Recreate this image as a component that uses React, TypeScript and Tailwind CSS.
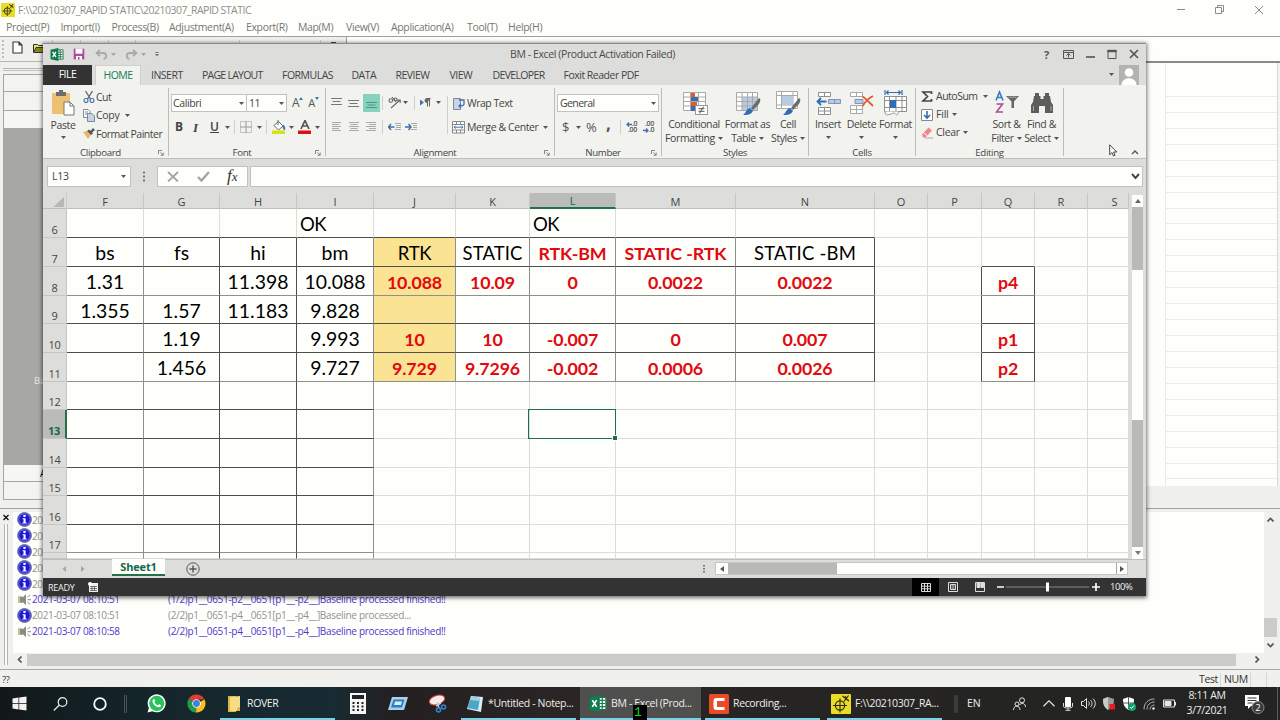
import React from "react";

const cx = (...parts: (string | false | undefined)[]) => parts.filter(Boolean).join(" ");

/* ---------- small shared glyphs ---------- */

function Caret({ className = "" }: { className?: string }) {
  return (
    <svg className={cx("h-[3px] w-[5px] shrink-0", className)} viewBox="0 0 5 3" fill="#555">
      <path d="M0 0h5L2.5 3z" />
    </svg>
  );
}

function Launcher() {
  return (
    <svg className="h-[6px] w-[6px]" viewBox="0 0 6 6" fill="none" stroke="#777" strokeWidth="0.9">
      <path d="M0.5 4V0.5H4M2.5 2.5L5 5M5.2 2.6V5.3H2.6" />
    </svg>
  );
}

function Sep({ className = "" }: { className?: string }) {
  return <div className={cx("w-px shrink-0 bg-[#cfd0cd]", className)} />;
}

function ExcelIcon({ className = "" }: { className?: string }) {
  return (
    <svg className={cx("shrink-0", className)} viewBox="0 0 14 14">
      <rect x="7" y="2" width="6.5" height="10" fill="#fff" stroke="#1f7a52" strokeWidth="1" />
      <path d="M8 4.5h5M8 7h5M8 9.5h5M10.5 2v10" stroke="#1f7a52" strokeWidth="1" />
      <path d="M0 1.8L8.5 0v14L0 12.2z" fill="#107c4c" />
      <path d="M2.3 4.2l3.6 5.6M5.9 4.2L2.3 9.8" stroke="#fff" strokeWidth="1.4" />
    </svg>
  );
}

function SurveyIcon({ className = "" }: { className?: string }) {
  return (
    <svg className={cx("shrink-0", className)} viewBox="0 0 20 20">
      <rect width="20" height="20" rx="1" fill="#e8dc27" />
      <circle cx="9" cy="11.5" r="4.6" fill="none" stroke="#2c2a08" strokeWidth="1.2" />
      <path d="M9 4.5v14M2 11.5h14" stroke="#2c2a08" strokeWidth="1.1" />
      <path d="M11.500 2l6.500 5M17.500 1.500L13 7.500M14 2.500l3 3.500" stroke="#2c2a08" strokeWidth="1.200" />
    </svg>
  );
}

/* ---------- background application ---------- */

const menus: [string, string][] = [
  ["Project(P)", "w-[54.500px]"],
  ["Import(I)", "w-[51px]"],
  ["Process(B)", "w-[57.500px]"],
  ["Adjustment(A)", "w-[77px]"],
  ["Export(R)", "w-[52px]"],
  ["Map(M)", "w-[48px]"],
  ["View(V)", "w-[45px]"],
  ["Application(A)", "w-[76px]"],
  ["Tool(T)", "w-[41px]"],
  ["Help(H)", "w-[40px]"],
];

const log: { kind: "info" | "sound"; time: string; text: string }[] = [
  { kind: "info", time: "20", text: "" },
  { kind: "info", time: "20", text: "" },
  { kind: "info", time: "20", text: "" },
  { kind: "info", time: "20", text: "" },
  { kind: "info", time: "20", text: "" },
  { kind: "sound", time: "2021-03-07 08:10:51", text: "(1/2)p1__0651-p2__0651[p1__-p2__]Baseline processed finished!!" },
  { kind: "info", time: "2021-03-07 08:10:51", text: "(2/2)p1__0651-p4__0651[p1__-p4__]Baseline processed..." },
  { kind: "sound", time: "2021-03-07 08:10:58", text: "(2/2)p1__0651-p4__0651[p1__-p4__]Baseline processed finished!!" },
];

function InfoIcon() {
  return (
    <svg className="h-[15px] w-[15px] shrink-0" viewBox="0 0 15 15">
      <circle cx="7.5" cy="7.5" r="6.9" fill="#1c17d6" stroke="#77788c" strokeWidth="1" />
      <circle cx="7.5" cy="7.5" r="5.7" fill="none" stroke="#c9c9f5" strokeWidth="0.5" />
      <rect x="6.4" y="3" width="2.2" height="2" fill="#fff" />
      <path d="M5.6 6.2h3v4.2h1v1.1H5.5v-1.1h1V7.3h-.9z" fill="#fff" />
    </svg>
  );
}

function SoundIcon() {
  return (
    <svg className="h-[13px] w-[15px] shrink-0" viewBox="0 0 15 13">
      <rect x="1" y="3" width="4" height="7" fill="#c4c99b" />
      <path d="M3 4h3l3-3v11L6 9.5H3z" fill="#8b8c88" />
      <path d="M10.5 4L13 2M10.5 6.7H14M10.5 9l2.5 2.4" stroke="#8b8c88" strokeWidth="1" />
    </svg>
  );
}

function LeftPane() {
  return (
    <div className="flex w-[43px] flex-col overflow-hidden border-t border-[#b4b5b1] bg-[#f0f0ed] pl-[3px]">
      <div className="mt-[6px] h-px bg-[#b4b5b1]" />
      <div className="mt-[1px] h-px bg-[#c4c5c1]" />
      <div className="mt-[3px] h-[18px] shrink-0 border border-r-0 border-[#a5a6a2] bg-[#f3f3f1]" />
      <div className="h-[19px] shrink-0 border border-t-0 border-r-0 border-[#a5a6a2] bg-[#f3f3f1]" />
      <div className="h-[17px] shrink-0 border-l border-[#a5a6a2] bg-[#f6f6f4]" />
      <div className="flex h-[337px] shrink-0 bg-[#a7a8a4] pt-[245px] pl-[31px] text-[9.5px] leading-[16px] text-[#e9e9e7]">Ba</div>
      <div className="h-[17px] shrink-0 border-b border-l border-[#a5a6a2] bg-[#f6f6f4] pl-[36px] text-[10px] leading-[17px] text-black">A</div>
      <div className="h-[18px] shrink-0 border border-t-0 border-r-0 border-[#a5a6a2] bg-[#f3f3f1]" />
    </div>
  );
}

function RightPane() {
  return (
    <div className="flex flex-1 flex-col border-t-2 border-[#8a8b89] bg-[#fefffb]">
      <div className="flex h-[423px]">
        <div className="w-[1123px] border-r border-[#ebece8]" />
        <div className="flex flex-1 flex-col overflow-hidden pt-[18px]">
          {Array.from({ length: 25 }, (_, i) => (
            <div key={i} className="h-[15.95px] shrink-0 border-b border-[#ebece8]" />
          ))}
        </div>
        <div className="w-[3px] border-l border-[#d8d9d5] bg-[#f4f4f2]" />
      </div>
      <div className="h-[19px] bg-[#efefed]" />
    </div>
  );
}

function BackgroundApp() {
  return (
    <div className="flex h-[687px] w-[1280px] flex-col bg-[#fefffb]">
      <div className="flex h-[20px] items-center pl-[1px]">
        <SurveyIcon className="h-[14px] w-[14px]" />
        <span className="ml-[3px] w-[1157px] text-[10.5px] tracking-[-0.52px] text-[#8e8e8b]">{"F:\\\\20210307_RAPID STATIC\\20210307_RAPID STATIC"}</span>
        <svg className="h-[12px] w-[92px] shrink-0" viewBox="0 0 92 12" fill="none" stroke="#8b8b89" strokeWidth="1">
          <path d="M2 5.5h8M40.5 3.5h6v6h-6zM42.5 3V1.500h6v6H47M80 2l8 8M88 2l-8 8" />
        </svg>
      </div>
      <div className="flex h-[16px] items-center pb-[2px] pl-[6px] text-[10.5px] tracking-[-0.36px] text-[#777774]">
        {menus.map(([name, width]) => (
          <span key={name} className={width}>{name}</span>
        ))}
      </div>
      <div className="flex h-[25px] items-start border-t border-[#a0a19e]">
        <div className="flex h-[24px] w-[347px] items-start border-r border-[#999] bg-[#f0f0ed]">
          <div className="mt-[3px] ml-[2px] h-[18px] w-0 border-l-2 border-dotted border-[#c0c1bd]" />
          <svg className="mt-[4px] ml-[8px] h-[13px] w-[11px] shrink-0" viewBox="0 0 11 13" fill="#fff" stroke="#333" strokeWidth="1.1">
            <path d="M1 1h6l3 3v8H1zM7 1v3h3" />
          </svg>
          <svg className="mt-[5px] ml-[10px] h-[11px] w-[14px] shrink-0" viewBox="0 0 14 11">
            <path d="M0.500 10V2.500h4l1 1h5v2" fill="#e8e46a" stroke="#333" />
            <path d="M0.500 10.500L3 5.500h10.500l-3 5z" fill="#8b8b1d" stroke="#333" />
          </svg>
          <div className="mt-[3px] ml-[5px] flex">
            <Sep className="h-[4px] bg-[#888]" />
            <Sep className="ml-[27px] h-[4px] bg-[#888]" />
            <Sep className="ml-[27px] h-[4px] bg-[#888]" />
            <Sep className="ml-[26px] h-[4px] bg-[#888]" />
            <Sep className="ml-[103px] h-[4px] bg-[#888]" />
            <Sep className="ml-[80px] h-[4px] bg-[#888]" />
            <div className="mt-[2px] ml-[10px] h-[2px] w-[5px] bg-[#444]" />
          </div>
        </div>
        <div className="h-[24px] flex-1 bg-[#fefffb]" />
      </div>
      <div className="flex h-[444px]">
        <LeftPane />
        <RightPane />
      </div>
      <div className="h-[4px] border-b border-[#a0a19e] bg-[#f0f0ed]" />
      <div className="flex h-[160px] bg-[#f0f0ed] pt-[3px]">
        <div className="flex w-[13px] flex-col items-center">
          <svg className="mt-[2px] mr-[2px] h-[7px] w-[6px]" viewBox="0 0 6 7" stroke="#111" strokeWidth="1.4">
            <path d="M0.500 1l5 5M5.500 1l-5 5" />
          </svg>
          <div className="mt-[3px] mr-[1px] h-[141px] w-[4px] border-x border-[#b4b5b1] bg-[#fafaf8]" />
        </div>
        <div className="flex flex-1 flex-col">
          <div className="flex h-[141px]">
            <div className="w-[1251px] bg-[#fefffb] pl-[4px]">
              {log.map((l, i) => (
                <div
                  key={i}
                  className={cx(
                    "flex h-[15.9px] items-center text-[10px] tracking-[-0.35px]",
                    l.kind === "info" ? "text-[#92928f]" : "text-[#5534d0]",
                  )}
                >
                  {l.kind === "info" ? <InfoIcon /> : <SoundIcon />}
                  <span className="w-[136px]">{l.time}</span>
                  <span className="tracking-[-0.310px]">{l.text}</span>
                </div>
              ))}
            </div>
            <div className="flex w-[13px] flex-col items-center bg-[#f0f0ed]">
              <svg className="mt-[5px] h-[5px] w-[7px]" viewBox="0 0 7 5" fill="none" stroke="#555" strokeWidth="1.6">
                <path d="M0.500 4.500l3-3 3 3" />
              </svg>
              <div className="mt-[96px] h-[19px] w-[13px] bg-[#cbccc8]" />
              <svg className="mt-[6px] h-[5px] w-[7px]" viewBox="0 0 7 5" fill="none" stroke="#555" strokeWidth="1.6">
                <path d="M0.500 0.500l3 3 3-3" />
              </svg>
            </div>
          </div>
          <div className="flex h-[13px] items-center">
            <svg className="ml-[4px] h-[7px] w-[5px]" viewBox="0 0 5 7" fill="none" stroke="#555" strokeWidth="1.6">
              <path d="M4.500 0.500l-3 3 3 3" />
            </svg>
            <div className="ml-[5px] h-[12px] w-[1209px] bg-[#cbccc8]" />
            <svg className="ml-[19px] h-[7px] w-[5px]" viewBox="0 0 5 7" fill="none" stroke="#555" strokeWidth="1.6">
              <path d="M0.500 0.500l3 3-3 3" />
            </svg>
          </div>
        </div>
      </div>
      <div className="flex flex-1 items-center border-t border-[#a9aaa6] bg-[#f0f0ed] pt-[2px] pl-[2px] text-[10.5px] tracking-[-0.400px] text-[#333]">
        <span className="w-[1197px] text-[9.500px]">??</span>
        <span className="w-[21px]">Test</span>
        <div className="flex h-[14px] w-[31px] items-center border-x border-[#d6d7d3] pl-[3px]">NUM</div>
        <div className="h-[14px] w-[16px] border-r border-[#d6d7d3]" />
      </div>
    </div>
  );
}

/* ---------- Excel window ---------- */

function TitleBar() {
  return (
    <div className="flex h-[21px] items-center">
      <ExcelIcon className="ml-[7px] h-[13px] w-[14px]" />
      <svg className="ml-[9px] h-[12px] w-[12px]" viewBox="0 0 12 12">
        <path d="M0.700 0.700h10.600v10.600H0.700z" fill="#b04a9e" />
        <path d="M2.500 0.700h7v5h-7z" fill="#fff" />
        <path d="M3 8h6v3.500H3z" fill="#fff" />
        <path d="M5 9h1.500v2.500H5z" fill="#b04a9e" />
      </svg>
      <svg className="ml-[10px] h-[11px] w-[13px]" viewBox="0 0 13 11" fill="none" stroke="#a9aaa7" strokeWidth="1.8">
        <path d="M5 0.800L1.500 4 5 7.200M1.500 4H8c4 0 4.500 5 0.500 6" />
      </svg>
      <Caret className="ml-[3px] opacity-40" />
      <svg className="ml-[9px] h-[11px] w-[13px]" viewBox="0 0 13 11" fill="none" stroke="#a9aaa7" strokeWidth="1.8">
        <path d="M8 0.800L11.500 4 8 7.200M11.500 4H5C1 4 0.500 9 4.500 10" />
      </svg>
      <Caret className="ml-[3px] opacity-40" />
      <svg className="ml-[9px] h-[5px] w-[4px]" viewBox="0 0 5 6" fill="#777">
        <path d="M0.500 0h4v1h-4zM0 2.500h5L2.500 5.500z" />
      </svg>
      <div className="ml-[351px] w-[170px] text-[10.5px] tracking-[-0.400px] text-[#4a4a48]">BM - Excel (Product Activation Failed)</div>
      <span className="ml-[364px] w-[19px] text-[11px] font-bold text-[#555]">?</span>
      <svg className="h-[10px] w-[78px]" viewBox="0 0 78 10" fill="none" stroke="#555" strokeWidth="1">
        <path d="M0.500 1.500h10v8h-10zM0.500 3.500h10M5.500 8.500V5M3.500 6.500l2-2 2 2" />
        <path d="M23 8h9" strokeWidth="1.6" />
        <path d="M45 1v8.500h8V1" />
        <path d="M44.500 2h9" strokeWidth="2.4" />
        <path d="M67 1l8 8M75 1l-8 8" strokeWidth="1.7" />
      </svg>
    </div>
  );
}

const tabs: [string, string][] = [
  ["INSERT", "w-[51px]"],
  ["PAGE LAYOUT", "w-[80px] tracking-[-0.750px]"],
  ["FORMULAS", "w-[69.500px]"],
  ["DATA", "w-[44px]"],
  ["REVIEW", "w-[54px]"],
  ["VIEW", "w-[43px]"],
  ["DEVELOPER", "w-[71px] tracking-[-0.650px]"],
  ["Foxit Reader PDF", "w-[90px]"],
];

function TabRow() {
  return (
    <div className="flex h-[20px] text-[10.500px] tracking-[-0.500px] text-[#444]">
      <div className="flex h-full w-[49px] items-center justify-center bg-[#333] text-white">FILE</div>
      <div className="ml-[3px] flex h-[21px] w-[46px] items-center justify-center border border-b-0 border-[#cfd0cd] bg-[#f2f3ef] text-[#0f7f57]">HOME</div>
      <div className="flex w-[968px] items-center pt-[1px] pl-[10px]">
        {tabs.map(([name, width]) => (
          <span key={name} className={width}>{name}</span>
        ))}
      </div>
      <Caret className="mt-[8px]" />
      <svg className="ml-[5px] h-[20px] w-[20px]" viewBox="0 0 20 20">
        <rect width="20" height="20" fill="#b3b4b1" />
        <circle cx="10" cy="7.500" r="4.300" fill="#fff" />
        <path d="M2.500 20c0-9 15-9 15 0z" fill="#fff" />
      </svg>
    </div>
  );
}

function Group({ label, width, children, launcher }: { label: string; width: string; children: React.ReactNode; launcher?: boolean }) {
  return (
    <div className={cx("flex h-[73px] shrink-0 flex-col", width)}>
      <div className="flex h-[61px]">{children}</div>
      <div
        className={cx(
          "grid h-[12px] items-center pt-[2px] text-center text-[9.700px] tracking-[-0.350px] text-[#444]",
          launcher ? "grid-cols-[1fr_10px]" : "grid-cols-1",
        )}
      >
        <span>{label}</span>
        {launcher && <Launcher />}
      </div>
    </div>
  );
}

function GroupLine() {
  return <div className="mt-[3px] h-[68px] w-px shrink-0 bg-[#bdbebb]" />;
}

function Clipboard() {
  return (
    <Group label="Clipboard" width="w-[125px]" launcher>
      <div className="flex w-[40px] flex-col items-center">
        <svg className="mt-[5px] h-[26px] w-[24px]" viewBox="0 0 24 26">
          <rect x="1" y="3" width="18" height="21" fill="#ecc172" />
          <path d="M5 2h3V0h4v2h3v4H5z" fill="#6d6e6c" />
          <path d="M13 12h6l4 4v9H13z" fill="#fff" stroke="#777" />
          <path d="M19 12v4h4" fill="none" stroke="#777" />
        </svg>
        <span className="mt-[3px] text-[10.500px] leading-[13px] tracking-[-0.400px]">Paste</span>
        <Caret className="mt-[4px]" />
      </div>
      <div className="flex flex-col pt-[3px] text-[10.500px] tracking-[-0.500px]">
        <div className="flex h-[18.500px] items-center">
          <svg className="h-[12px] w-[13px]" viewBox="0 0 13 12" fill="none">
            <path d="M2.500 0l5 8M9.500 0l-5 8" stroke="#666" strokeWidth="1.300" />
            <circle cx="3" cy="9.500" r="2" stroke="#3d70b5" strokeWidth="1.100" />
            <circle cx="9" cy="9.500" r="2" stroke="#3d70b5" strokeWidth="1.100" />
          </svg>
          <span>Cut</span>
        </div>
        <div className="flex h-[18.500px] items-center">
          <svg className="h-[13px] w-[13px]" viewBox="0 0 13 13" fill="#fff" stroke="#7f8896" strokeWidth="1">
            <path d="M0.500 0.500H5l2 2v6H0.500zM2 3h3M2 5h3" />
            <path d="M4.500 4.500H9l2.500 2.500v5.500h-7z" fill="#c5d3e6" />
          </svg>
          <span className="tracking-[-0.300px]">Copy</span>
          <Caret className="ml-[6px]" />
        </div>
        <div className="flex h-[18.500px] items-center">
          <svg className="h-[11px] w-[13px]" viewBox="0 0 13 11">
            <path d="M0 4l4-1 4 4-3 4z" fill="#e6b866" />
            <path d="M4 3l2-1.500 4 4L8 7zM7.500 3L10 0l2 2-3 2.500z" fill="#555" />
          </svg>
          <span>Format Painter</span>
        </div>
      </div>
    </Group>
  );
}

function FontGroup() {
  return (
    <Group label="Font" width="w-[156px]" launcher>
      <div className="flex flex-col pt-[9px] pl-[2px]">
        <div className="flex h-[18px] items-center text-[10.500px] tracking-[-0.400px]">
          <div className="flex h-[18px] w-[76px] items-center justify-between border border-[#c2c3c0] bg-[#fefffb] pt-[1px] pr-[2px] pl-px">
            Calibri
            <Caret />
          </div>
          <div className="flex h-[18px] w-[40px] items-center justify-between border border-l-0 border-[#c2c3c0] bg-[#fefffb] pt-[1px] pr-[2px] pl-[2px]">
            11
            <Caret />
          </div>
          <span className="ml-[5px] text-[12px] text-[#555]">A</span>
          <svg className="mt-[-8px] h-[3px] w-[4px]" viewBox="0 0 4 3" fill="#3d70b5"><path d="M2 0l2 3H0z" /></svg>
          <span className="ml-[5px] text-[11px] text-[#555]">A</span>
          <svg className="mt-[-8px] h-[3px] w-[4px]" viewBox="0 0 4 3" fill="#3d70b5"><path d="M2 3L0 0h4z" /></svg>
        </div>
        <div className="mt-[7px] flex h-[17px] items-center text-[12px] text-[#444]">
          <b className="ml-[4px] w-[18px]">B</b>
          <i className="w-[17px] font-['Liberation_Serif',serif] text-[13px] font-bold">I</i>
          <span className="w-[15px] font-semibold underline">U</span>
          <Caret />
          <Sep className="ml-[4px] h-[14px]" />
          <svg className="ml-[5px] h-[12px] w-[12px]" viewBox="0 0 12 12" fill="none" stroke="#999" strokeWidth="1">
            <path d="M0.500 0.500h11v11H0.500z" strokeDasharray="1 1" />
            <path d="M6 0v12M0 6h12" />
          </svg>
          <Caret className="ml-[5px]" />
          <Sep className="ml-[4px] h-[14px]" />
          <svg className="ml-[5px] h-[14px] w-[14px]" viewBox="0 0 14 14" fill="none">
            <path d="M2 5.500l4.500-4 4.500 4.500-4.500 4z" fill="#fff" stroke="#666" />
            <path d="M6 0v5" stroke="#666" />
            <path d="M11 5c2 1 2 3 1.500 5-1-1-1.500-3-1.500-5z" fill="#3d70b5" stroke="#3d70b5" />
            <rect y="10.500" width="13" height="3.500" fill="#d3e50f" />
          </svg>
          <Caret className="ml-[3px]" />
          <svg className="ml-[4px] h-[14px] w-[14px]" viewBox="0 0 14 14" fill="none">
            <path d="M3 9L7 0.500 11 9M4.500 6h5" stroke="#555" strokeWidth="1.700" />
            <rect y="10.500" width="13" height="3.500" fill="#e00f17" />
          </svg>
          <Caret className="ml-[3px]" />
        </div>
      </div>
    </Group>
  );
}

function Lines({ d, color = "#777" }: { d: string; color?: string }) {
  return (
    <svg className="h-[12px] w-[13px] shrink-0" viewBox="0 0 13 12" fill="none" stroke={color} strokeWidth="1">
      <path d={d} />
    </svg>
  );
}

function Alignment() {
  return (
    <Group label="Alignment" width="w-[228px]" launcher>
      <div className="flex w-[121px] flex-col pt-[9px] pl-[4px]">
        <div className="flex h-[18px] items-center">
          <Lines d="M1 1.500h11M2.500 4.500h8M1 7.500h11" />
          <div className="w-[4px]" />
          <Lines d="M1 3.500h11M2.500 6.500h8M1 9.500h11" />
          <div className="ml-[3px] flex h-[18px] w-[17px] items-center justify-center bg-[#85d3bd]">
            <Lines d="M1 5.500h11M2.500 8h8M1 10.500h11" color="#55927f" />
          </div>
          <Sep className="ml-[2px] h-[14px]" />
          <svg className="ml-[5px] h-[13px] w-[13px]" viewBox="0 0 13 13" fill="none" stroke="#666" strokeWidth="1.100">
            <circle cx="2.800" cy="4.500" r="1.800" />
            <path d="M4 1l4 5" />
            <circle cx="7.500" cy="3.500" r="1.500" />
            <path d="M3 12l9-8M9 4h3.200v3" />
          </svg>
          <Caret className="ml-[2px]" />
          <Sep className="ml-[6px] h-[14px]" />
          <svg className="ml-[5px] h-[9px] w-[11px]" viewBox="0 0 11 9">
            <path d="M0 1.500l4 3-4 3z" fill="#3d70b5" />
            <path d="M7.500 0.500v8M9.500 0.500v8M10.500 0.500H7a2 2 0 000 4" fill="#666" stroke="#666" />
          </svg>
          <Caret className="ml-[5px]" />
        </div>
        <div className="mt-[7px] flex h-[17px] items-center">
          <div className="w-px" />
          <Lines d="M1 1.500h9M1 3.500h7M1 5.500h9M1 7.500h7M1 9.500h9" color="#aaa" />
          <div className="w-[4px]" />
          <Lines d="M1 1.500h10M2.500 3.500h7M1 5.500h10M2.500 7.500h7M1 9.500h10" color="#aaa" />
          <div className="w-[4px]" />
          <Lines d="M1 1.500h10M4 3.500h7M1 5.500h10M4 7.500h7M1 9.500h10" color="#aaa" />
          <Sep className="ml-[4px] h-[14px]" />
          <svg className="ml-[5px] h-[10px] w-[30px]" viewBox="0 0 30 10" fill="none">
            <path d="M7 1.500h6M8 3.500h5M8 5.500h5M7 7.500h6M23 1.500h6M25 3.500h4M25 5.500h4M23 7.500h6" stroke="#aaa" />
            <path d="M0.500 5h6M3 2L0.500 5 3 8M17 5h6M20.500 2L23 5l-2.500 3" stroke="#3d70b5" strokeWidth="1.500" />
          </svg>
        </div>
      </div>
      <Sep className="mt-[11px] h-[38px]" />
      <div className="flex flex-col pt-[9px] pl-[4px] text-[10.500px] tracking-[-0.500px]">
        <div className="flex h-[18px] items-center pt-[2px]">
          <svg className="h-[14px] w-[14px]" viewBox="0 0 14 14" fill="none">
            <path d="M1.500 1.500h7v11h-7z" fill="#c5d6ea" stroke="#888" />
            <path d="M7 3h5v4c0 2-3 2-5 2M9 7L7 9l2 2" stroke="#3d70b5" strokeWidth="1.300" />
          </svg>
          <span className="ml-px">Wrap Text</span>
        </div>
        <div className="mt-[7px] flex h-[17px] items-center pt-[1px]">
          <svg className="h-[13px] w-[14px] shrink-0" viewBox="0 0 14 13" fill="#fff" stroke="#888">
            <path d="M0.500 0.500h12v11.500h-12zM0.500 3.500h12M0.500 9h12M4.500 0.500v3M8.500 0.500v3M4.500 9v3M8.500 9v3" />
            <path d="M2 6.200h9M3.500 4.800L2 6.200l1.500 1.500M9.500 4.800L11 6.200 9.500 7.700" fill="none" stroke="#3d70b5" />
          </svg>
          <span className="ml-px w-[76px] tracking-[-0.420px]">Merge &amp; Center</span>
          <Caret />
        </div>
      </div>
    </Group>
  );
}

function NumberGroup() {
  return (
    <Group label="Number" width="w-[106px]" launcher>
      <div className="flex flex-col pt-[9px] pl-[2px]">
        <div className="flex h-[18px] w-[102px] items-center justify-between border border-[#c2c3c0] bg-[#fefffb] px-[2px] pt-[1px] text-[10.500px] tracking-[-0.600px]">
          General
          <Caret />
        </div>
        <div className="mt-[7px] flex h-[17px] items-center text-[13px] text-[#555]">
          <span className="ml-[5px] w-[14px]">$</span>
          <Caret />
          <span className="ml-[5px] w-[20px]">%</span>
          <span className="w-[14px] pb-[6px] text-[17px] leading-[8px] font-bold">,</span>
          <Sep className="h-[14px]" />
          <div className="ml-[5px] flex w-[17px] flex-col text-[7px] leading-[6px] font-semibold tracking-[-0.300px]">
            <span className="flex items-center">
              <svg className="h-[5px] w-[6px]" viewBox="0 0 6 5" fill="none" stroke="#3d70b5" strokeWidth="1.300"><path d="M6 2.500H1M3 0.500l-2 2 2 2" /></svg>.0
            </span>
            <span className="pl-[2px]">.00</span>
          </div>
          <div className="flex flex-col text-[7px] leading-[6px] font-semibold tracking-[-0.300px]">
            <span className="pl-[2px]">.00</span>
            <span className="flex items-center">
              <svg className="h-[5px] w-[6px]" viewBox="0 0 6 5" fill="none" stroke="#3d70b5" strokeWidth="1.300"><path d="M0 2.500h5M3 0.500l2 2-2 2" /></svg>.0
            </span>
          </div>
        </div>
      </div>
    </Group>
  );
}

function BigButton({ icon, lines, width, caretBelow }: { icon: React.ReactNode; lines: string[]; width: string; caretBelow?: boolean }) {
  return (
    <div className={cx("flex shrink-0 flex-col items-center pt-[5px] text-[10.500px] leading-[13.500px] tracking-[-0.400px]", width)}>
      <div className="flex h-[28.500px] items-start">{icon}</div>
      <span>{lines[0]}</span>
      {caretBelow ? (
        <Caret className="mt-[4px]" />
      ) : (
        <span className="flex items-center gap-[3px]">
          {lines[1]}
          <Caret />
        </span>
      )}
    </div>
  );
}

function Brush() {
  return (
    <>
      <path d="M24 8c2 1 1.500 4-0.500 6.500L18 20l-2-2z" fill="#6b6c6a" />
      <path d="M15 18l3 3c-2 4-6 4-10 4 3-2 3-6 7-7z" fill="#2f6eb5" />
    </>
  );
}

function StylesGroup() {
  return (
    <Group label="Styles" width="w-[146px]">
      <BigButton
        width="w-[64px]"
        lines={["Conditional", "Formatting"]}
        icon={
          <svg className="ml-[2px] h-[26px] w-[26px]" viewBox="0 0 26 26">
            <path d="M1.500 2.500h22v18h-22zM1.500 7h22M1.500 11.500h22M1.500 16h22M8.500 2.500v18M16.500 2.500v18" fill="#fff" stroke="#a9aaa7" />
            <path d="M9 3h4v4H9zM9 12h6v4H9z" fill="#e2592f" />
            <path d="M9 7h7v4H9zM9 16h4v5H9z" fill="#3a6fae" />
            <rect x="13.500" y="15.500" width="12" height="9" fill="#fff" stroke="#999" />
            <path d="M16.500 18.700h6M16.500 21.300h6M21.500 16.500l-4 7" stroke="#555" />
          </svg>
        }
      />
      <BigButton
        width="w-[43px]"
        lines={["Format as", "Table"]}
        icon={
          <svg className="h-[26px] w-[26px]" viewBox="0 0 26 26">
            <path d="M1.500 2.500h21v18h-21z" fill="#fff" />
            <path d="M7 7h15.500v13.500H7z" fill="#b8cbe6" />
            <path d="M1.500 2.500h21v18h-21zM1.500 7h21M1.500 11.500h21M1.500 16h21M7 2.500v18M12.500 2.500v18M17.500 2.500v18" fill="none" stroke="#a9aaa7" />
            <Brush />
          </svg>
        }
      />
      <BigButton
        width="w-[38px]"
        lines={["Cell", "Styles"]}
        icon={
          <svg className="h-[26px] w-[26px]" viewBox="0 0 26 26">
            <path d="M1.500 1.500h21v17h-21zM1.500 5.500h21M1.500 15h21M6.500 1.500v17M18 1.500v17" fill="#fff" stroke="#a9aaa7" />
            <path d="M7 6h11v9H7z" fill="#b8cbe6" />
            <Brush />
          </svg>
        }
      />
    </Group>
  );
}

function CellsGroup() {
  return (
    <Group label="Cells" width="w-[106px]">
      <BigButton
        width="w-[38px]"
        lines={["Insert"]}
        caretBelow
        icon={
          <svg className="h-[26px] w-[25px]" viewBox="0 0 25 26">
            <path d="M2.500 2.500h12v4h-12zM8.500 2.500v4M2.500 17.500h12v7h-12zM8.500 17.500v7M2.500 21h12" fill="#fff" stroke="#8f908d" />
            <path d="M12.500 9.500h12v4h-12zM18.500 9.500v4" fill="#b8cbe6" stroke="#7f95b3" />
            <path d="M1.500 11.500h9M5 8l-3.500 3.500L5 15" fill="none" stroke="#2f6eb5" strokeWidth="1.800" />
          </svg>
        }
      />
      <BigButton
        width="w-[29px]"
        lines={["Delete"]}
        caretBelow
        icon={
          <svg className="h-[26px] w-[25px]" viewBox="0 0 25 26">
            <path d="M1.500 2.500h12v4h-12zM7.500 2.500v4M1.500 15.500h12v8h-12zM7.500 15.500v8M1.500 19.500h12" fill="#fff" stroke="#a9aaa7" />
            <path d="M6 9.500h8v4H6z" fill="#b8cbe6" stroke="#7f95b3" />
            <path d="M13.500 6.500c3 2 7 6 10.500 9.500M24 6c-4 2-8 6-10.500 10" fill="none" stroke="#e2592f" strokeWidth="1.800" />
          </svg>
        }
      />
      <BigButton
        width="w-[39px]"
        lines={["Format"]}
        caretBelow
        icon={
          <svg className="h-[27px] w-[25px]" viewBox="0 0 25 27">
            <path d="M2 0v5M19 0v5M3 2.500h15M5.500 0.500l-2 2 2 2M15.500 0.500l2 2-2 2" fill="none" stroke="#2f6eb5" strokeWidth="1.200" />
            <path d="M1.500 6.500h22v15h-22zM1.500 10.500h22M1.500 17.500h22M6.500 6.500v15M13 6.500v15M19 6.500v15" fill="#fff" stroke="#8f908d" />
            <path d="M7 10h6v8H7z" fill="#2f6eb5" />
            <path d="M2 21.500c0 5 4 3 6 2.500s3-2 4.500 0 3 0 3-2.500" fill="#fff" stroke="#8f908d" />
          </svg>
        }
      />
    </Group>
  );
}

function EditingGroup() {
  return (
    <Group label="Editing" width="w-[147px]">
      <div className="flex w-[73px] flex-col pt-[3px] pl-[5px] text-[10.500px] tracking-[-0.500px]">
        <div className="flex h-[18px] items-center">
          <svg className="h-[11px] w-[12px] shrink-0" viewBox="0 0 12 11" fill="none" stroke="#444" strokeWidth="1.700">
            <path d="M10.500 3V1H2l4.500 4.500L2 10h8.500V8" />
          </svg>
          <span className="ml-[3px] w-[47px]">AutoSum</span>
          <Caret />
        </div>
        <div className="flex h-[18px] items-center">
          <svg className="h-[12px] w-[12px]" viewBox="0 0 12 12" fill="#fff" stroke="#888">
            <path d="M0.500 0.500h11v11h-11z" />
            <path d="M6 2v7M3 6l3 3 3-3" fill="none" stroke="#2f6eb5" strokeWidth="1.600" />
          </svg>
          <span className="ml-[3px] tracking-[-0.200px]">Fill</span>
          <Caret className="ml-[3px]" />
        </div>
        <div className="flex h-[18px] items-center">
          <svg className="h-[12px] w-[12px]" viewBox="0 0 12 12">
            <path d="M1 7.500L7.500 0.500l3.500 3-6.500 7H2z" fill="#f0868c" />
            <path d="M2.500 5.500l4 3.500" stroke="#fff" />
            <path d="M4 11h8" stroke="#aaa" />
          </svg>
          <span className="ml-[3px] tracking-[-0.300px]">Clear</span>
          <Caret className="ml-[3px]" />
        </div>
      </div>
      <BigButton
        width="w-[35px]"
        lines={["Sort &", "Filter"]}
        icon={
          <svg className="h-[26px] w-[24px]" viewBox="0 0 24 26" fill="none">
            <path d="M1 10.500L4.500 2 8 10.500M2.300 7.500h4.500" stroke="#3a78c2" strokeWidth="1.600" />
            <path d="M1.500 14h6l-6 8h6.500" stroke="#b04a9e" strokeWidth="1.600" />
            <path d="M11 6h13l-5 5.500V18h-2.500v-6.500z" fill="#666765" />
            <path d="M13.500 7.200h8" stroke="#aaa" />
          </svg>
        }
      />
      <BigButton
        width="w-[35px]"
        lines={["Find &", "Select"]}
        icon={
          <svg className="h-[24px] w-[24px]" viewBox="0 0 24 24" fill="#5d5e5c">
            <path d="M5 3h4v3h1.500v3h3V6H15V3h4v3h1l1 6 2 3v8h-8v-7H9v7H1v-8l2-3 1-6h1z" />
            <path d="M3.500 16v5M21 16v5" stroke="#aaa" />
          </svg>
        }
      />
    </Group>
  );
}

function Ribbon() {
  return (
    <div className="flex h-[74px] border-b border-[#bfc0bd] bg-[#f2f3ef] text-[#444]">
      <Clipboard />
      <GroupLine />
      <FontGroup />
      <GroupLine />
      <Alignment />
      <GroupLine />
      <NumberGroup />
      <GroupLine />
      <StylesGroup />
      <GroupLine />
      <CellsGroup />
      <GroupLine />
      <EditingGroup />
      <GroupLine />
      <svg className="mt-[64px] ml-[67px] h-[6px] w-[8px]" viewBox="0 0 8 6" fill="none" stroke="#555" strokeWidth="1.400">
        <path d="M1 5l3-3 3 3" />
      </svg>
    </div>
  );
}

function FormulaBar() {
  return (
    <div className="flex h-[35px] items-start pt-[7px]">
      <div className="ml-[4px] flex h-[21px] w-[84px] items-center justify-between border border-[#c2c3c0] bg-[#fefffb] pt-[1px] pr-[4px] pl-[4px] text-[10.500px] tracking-[-0.300px] text-[#444]">
        L13
        <Caret />
      </div>
      <svg className="mt-[5px] ml-[12px] h-[11px] w-[2px]" viewBox="0 0 2 11" fill="#777">
        <path d="M0 0.500h2v2H0zM0 4.500h2v2H0zM0 8.500h2v2H0z" />
      </svg>
      <div className="ml-[12px] flex h-[21px] w-[91px] items-center border border-[#c2c3c0] bg-[#fefffb]">
        <svg className="ml-[9px] h-[11px] w-[12px]" viewBox="0 0 12 11" stroke="#a5a6a3" strokeWidth="1.800">
          <path d="M1 1l10 9.500M11 1L1 10.500" />
        </svg>
        <svg className="ml-[18px] h-[11px] w-[13px]" viewBox="0 0 13 11" fill="none" stroke="#a5a6a3" strokeWidth="2.400">
          <path d="M1 6l3.500 3.500L12 1" />
        </svg>
        <span className="ml-[17px] font-['Liberation_Serif',serif] text-[17px] leading-[18px] text-[#333] italic">
          f<span className="text-[13px]">x</span>
        </span>
      </div>
      <div className="ml-[2px] flex h-[21px] w-[893px] items-center justify-end border border-[#c2c3c0] bg-[#fefffb] pr-[2px]">
        <svg className="h-[7px] w-[9px]" viewBox="0 0 9 7" fill="none" stroke="#444" strokeWidth="1.900">
          <path d="M1 1l3.500 4L8 1" />
        </svg>
      </div>
    </div>
  );
}

const columns = ["F", "G", "H", "I", "J", "K", "L", "M", "N", "O", "P", "Q", "R", "S"];
const gridCols = "grid-cols-[24px_77px_76px_77px_77px_82px_74px_86px_120px_139px_53px_54px_53px_53px_41px]";

const rows: { n: number; h: string; v: Record<string, string> }[] = [
  { n: 6, h: "h-[29px]", v: { I: "OK", L: "OK" } },
  { n: 7, h: "h-[29px]", v: { F: "bs", G: "fs", H: "hi", I: "bm", J: "RTK", K: "STATIC", L: "RTK-BM", M: "STATIC -RTK", N: "STATIC -BM" } },
  { n: 8, h: "h-[29px]", v: { F: "1.31", H: "11.398", I: "10.088", J: "10.088", K: "10.09", L: "0", M: "0.0022", N: "0.0022", Q: "p4" } },
  { n: 9, h: "h-[28px]", v: { F: "1.355", G: "1.57", H: "11.183", I: "9.828" } },
  { n: 10, h: "h-[29px]", v: { G: "1.19", I: "9.993", J: "10", K: "10", L: "-0.007", M: "0", N: "0.007", Q: "p1" } },
  { n: 11, h: "h-[29px]", v: { G: "1.456", I: "9.727", J: "9.729", K: "9.7296", L: "-0.002", M: "0.0006", N: "0.0026", Q: "p2" } },
  { n: 12, h: "h-[28px]", v: {} },
  { n: 13, h: "h-[29px]", v: {} },
  { n: 14, h: "h-[29px]", v: {} },
  { n: 15, h: "h-[28px]", v: {} },
  { n: 16, h: "h-[29px]", v: {} },
  { n: 17, h: "h-[28px]", v: {} },
  { n: 18, h: "h-[6px]", v: {} },
];

/* Which of a cell's right and bottom edges carry a drawn table border. */
function cellBorders(c: string, n: number): string {
  const i = columns.indexOf(c);
  const inTable = (i <= 3 && n >= 7) || (i <= 8 && n >= 7 && n <= 11);
  const inQ = c === "Q" && n >= 8 && n <= 11;
  const right = inTable || inQ || (c === "P" && n >= 8 && n <= 11);
  const bottom = (inTable && n < 18) || inQ || (i <= 8 && n === 6) || (c === "Q" && n === 7);
  const softRow = n === 8 || n === 11 || n === 17;
  const softCol = "FIJKLM".includes(c);
  const r = right ? (softCol ? "border-r-[#8f908d]" : "border-r-[#4e4e4d]") : "border-r-[#dcddd9]";
  const b = bottom ? (softRow ? "border-b-[#8f908d]" : "border-b-[#4e4e4d]") : "border-b-[#dcddd9]";
  return r + " " + b;
}

function cellText(c: string, n: number): string {
  if (n === 6) return "justify-start pl-[3px] text-[18.500px] tracking-[-0.500px] text-black";
  const red = (n >= 8 && "JKLMNQ".includes(c)) || (n === 7 && "LM".includes(c));
  if (red) return "justify-center text-[17.800px] font-bold tracking-[-0.100px] text-[#e10a10]";
  if (n === 7 && c === "K") return "justify-center text-[18.500px] tracking-[0.100px] text-black";
  if (n === 7 && c === "N") return "justify-center text-[18.500px] tracking-[0.200px] text-black";
  if (n === 7 && c === "J") return "justify-center text-[18.500px] tracking-[-0.300px] text-black";
  return "justify-center text-[19.400px] text-black";
}

function Sheet() {
  return (
    <div className="flex h-[366px]">
      <div className="flex w-[1086px] flex-col overflow-hidden">
        <div className={cx("grid h-[16px] shrink-0 border-b border-[#bdbebb] text-[11px] text-[#444]", gridCols)}>
          <div className="flex items-end justify-end border-r border-[#cacbc8] pr-[2px] pb-[2px]">
            <svg className="h-[10px] w-[11px]" viewBox="0 0 11 10" fill="#b7b8b5"><path d="M11 0v10H0z" /></svg>
          </div>
          {columns.map((c) => (
            <div
              key={c}
              className={cx(
                "flex h-[16px] items-center justify-center border-r border-[#c6c7c4]",
                c === "L" && "border-b-2 border-b-[#217346] bg-[#bbbcb9] pt-[1px] text-[#15694a]",
                c === "S" && "pl-[13px]",
              )}
            >
              {c}
            </div>
          ))}
        </div>
        {rows.map(({ n, h, v }) => (
          <div key={n} className={cx("grid shrink-0", gridCols, h)}>
            <div
              className={cx(
                "flex items-end justify-center border-r border-b border-[#c6c7c4] pb-[1px] text-[11px] leading-[13px] tracking-[-0.300px] text-[#444]",
                n === 13 && "border-r-2 border-r-[#217346] bg-[#bbbcb9] font-bold text-[#15694a]",
              )}
            >
              {n < 18 ? n : ""}
            </div>
            {columns.map((c) => (
              <div
                key={c}
                className={cx(
                  "relative flex min-w-0 items-center border-r border-b font-['Lato',sans-serif] leading-[24px]",
                  n < 18 && "pt-[2px]",
                  c === "J" && n >= 7 && n <= 11 ? "bg-[#fae393]" : "bg-[#fefffb]",
                  cellBorders(c, n),
                  cellText(c, n),
                )}
              >
                {v[c] ?? ""}
                {c === "L" && n === 13 && (
                  <div className="absolute -top-px -right-px -bottom-px -left-[2px] z-10 border border-[#1c6e4c]">
                    <div className="absolute -right-[2px] -bottom-[2px] h-[4px] w-[4px] bg-[#1c6e4c] outline-1 outline-[#fefffb]" />
                  </div>
                )}
              </div>
            ))}
          </div>
        ))}
      </div>
      <div className="ml-[3px] flex w-[11px] flex-col pt-[2px]">
        <div className="flex h-[12px] items-center justify-center bg-[#fefffb]">
          <svg className="h-[4px] w-[6px]" viewBox="0 0 6 4" fill="#666"><path d="M0 4h6L3 0z" /></svg>
        </div>
        <div className="h-[63px] bg-[#b9bab7]" />
        <div className="h-[150px] bg-[#fefffb]" />
        <div className="h-[127px] bg-[#b9bab7]" />
        <div className="flex h-[12px] items-center justify-center bg-[#fefffb]">
          <svg className="h-[4px] w-[6px]" viewBox="0 0 6 4" fill="#777"><path d="M0 0h6L3 4z" /></svg>
        </div>
      </div>
    </div>
  );
}

function SheetTabs() {
  return (
    <div className="flex h-[19px] items-start border-t border-[#bdbebb]">
      <svg className="mt-[6px] ml-[19px] h-[6px] w-[24px]" viewBox="0 0 24 6" fill="#a5a6a3">
        <path d="M4 0v6L0.500 3zM19 0v6l3.500-3z" />
      </svg>
      <div className="-mt-px ml-[26px] flex h-[17px] w-[53px] items-center justify-center border-b-2 border-[#217346] bg-[#fefffb] text-[11px] font-bold tracking-[-0.150px] text-[#15694a]">Sheet1</div>
      <svg className="mt-[2px] ml-[21px] h-[14px] w-[14px]" viewBox="0 0 14 14" fill="none" stroke="#555">
        <circle cx="7" cy="7" r="6.200" />
        <path d="M7 3.500v7M3.500 7h7" strokeWidth="1.400" />
      </svg>
      <svg className="mt-[5px] ml-[503px] h-[8px] w-[2px]" viewBox="0 0 2 8" fill="#777">
        <path d="M0 0h2v1.500H0zM0 3h2v1.500H0zM0 6h2v1.500H0z" />
      </svg>
      <div className="mt-[2px] ml-[10px] flex h-[13px] w-[413px] border border-[#c6c7c4] bg-[#fefffb]">
        <div className="flex w-[12px] items-center justify-center">
          <svg className="h-[6px] w-[4px]" viewBox="0 0 4 6" fill="#555"><path d="M4 0v6L0 3z" /></svg>
        </div>
        <div className="w-[109px] bg-[#b9bab7]" />
        <div className="w-[280px] border-r border-[#a5a6a3]" />
        <div className="flex flex-1 items-center justify-center">
          <svg className="h-[6px] w-[4px]" viewBox="0 0 4 6" fill="#555"><path d="M0 0v6l4-3z" /></svg>
        </div>
      </div>
    </div>
  );
}

function StatusBar() {
  return (
    <div className="flex h-[18px] items-center bg-[#333] text-[9.500px] text-[#f1f1ef]">
      <span className="ml-[5px] w-[40px] text-[9px] tracking-[-0.250px]">READY</span>
      <svg className="h-[10px] w-[10px]" viewBox="0 0 10 10">
        <path d="M1 1h9v9H1z" fill="#eee" />
        <path d="M2 4.500h7M2 6.500h7M2 8.500h7M4 4v5M6.500 4v5" stroke="#333" strokeWidth="0.600" />
        <circle cx="2" cy="2" r="2" fill="#fff" />
      </svg>
      <div className="ml-[814px] flex h-full w-[27px] items-center justify-center bg-black">
        <svg className="h-[9px] w-[10px]" viewBox="0 0 10 9" fill="none" stroke="#eee" strokeWidth="0.900">
          <path d="M0.500 0.500h9v8h-9zM0.500 3.200h9M0.500 5.800h9M3.500 0.500v8M6.500 0.500v8" />
        </svg>
      </div>
      <svg className="ml-[9px] h-[10px] w-[37px]" viewBox="0 0 37 10" fill="none" stroke="#ddd">
        <path d="M0.500 0.500h9v9h-9zM2.500 2.500h5v5h-5zM3.500 4h3M3.500 6h3" />
        <path d="M27.500 0.500v9h9v-9z" />
        <path d="M29 0.500h3v5h-3zM33 0.500h2.500v5H33z" fill="#ddd" />
      </svg>
      <svg className="ml-[11px] h-[10px] w-[104px]" viewBox="0 0 104 10">
        <path d="M1 5h7M96 5h8M100 1v8" stroke="#fff" strokeWidth="1.700" />
        <path d="M10 5h83" stroke="#888" />
        <rect x="50" y="0.500" width="3" height="9" fill="#fff" />
      </svg>
      <span className="ml-[10px] tracking-[-0.400px]">100%</span>
    </div>
  );
}

function ExcelWindow() {
  return (
    <div className="absolute top-[43px] left-[43px] flex h-[553px] w-[1103px] flex-col bg-[#dddedb] shadow-[0_1px_4px_1px_rgba(0,0,0,0.55)]">
      <div className="h-px bg-[#8b8c8a]" />
      <TitleBar />
      <TabRow />
      <Ribbon />
      <FormulaBar />
      <Sheet />
      <SheetTabs />
      <StatusBar />
    </div>
  );
}

/* ---------- taskbar ---------- */

function TaskButton({ width, margin, icon, label, active }: { width: string; margin: string; icon: React.ReactNode; label: string; active?: boolean }) {
  return (
    <div className={cx("flex h-[33px] shrink-0 flex-col overflow-hidden", width, margin, active && "bg-[#4f4f4e]")}>
      <div className="flex h-[31px] items-center pt-[2px] text-[10.500px] tracking-[-0.350px]">
        {icon}
        <span className="ml-[4px]">{label}</span>
      </div>
      <div className="h-[2px] bg-[#76d4e9]" />
    </div>
  );
}

function Taskbar() {
  return (
    <div className="flex h-[33px] w-[1280px] items-center bg-[linear-gradient(90deg,#111819_0px,#14262b_150px,#182b33_330px,#241f20_400px,#2b2625_560px,#262524_820px,#222322_1280px)] text-[#eeeeec]">
      <svg className="ml-[12px] h-[15px] w-[15px] shrink-0" viewBox="0 0 15 15" fill="#f2f2f0">
        <path d="M0.500 2.500L6.500 1.600V7H0.500zM7.200 1.500L14.500 0.500V7H7.200zM0.500 7.800h6v5.600l-6-0.900zM7.200 7.800h7.300v6.700l-7.300-1z" />
      </svg>
      <svg className="ml-[26px] h-[14px] w-[15px] shrink-0" viewBox="0 0 15 14" fill="none" stroke="#eee" strokeWidth="1.200">
        <circle cx="9.500" cy="5" r="4.300" />
        <path d="M6.400 8L0.800 13.500" />
      </svg>
      <svg className="ml-[25px] h-[14px] w-[14px] shrink-0" viewBox="0 0 14 14" fill="none" stroke="#fff" strokeWidth="1.800">
        <circle cx="7" cy="7" r="5.800" />
      </svg>
      <div className="ml-[17px] h-[18px] w-[3px] shrink-0 border-x border-[#4a5254]" />
      <svg className="ml-[20px] h-[19px] w-[19px] shrink-0" viewBox="0 0 19 19">
        <path d="M0.500 18.500l1.400-4.600A9 9 0 1 1 5.300 17.200z" fill="#fff" />
        <circle cx="9.700" cy="9.300" r="7.600" fill="#28c35a" />
        <path d="M6 5.500c1-1 1.500-0.500 2.200 1.300 0.200 0.600-0.700 1.200-0.700 1.500 0.800 1.500 2 2.500 3.400 3 0.500 0 0.900-1.200 1.400-1 2 0.900 2.300 1.100 1.500 2.200-1.100 1.300-3.400 0.900-5.200-0.400C6.500 10.600 4.600 7.700 6 5.500z" fill="#fff" />
      </svg>
      <svg className="ml-[21px] h-[19px] w-[19px] shrink-0" viewBox="0 0 20 20">
        <path d="M10 10L1.800 5A9.500 9.500 0 0 1 18.500 5.800H10z" fill="#e33b2e" />
        <path d="M10 10l8.500-4.200A9.500 9.500 0 0 1 9.500 19.500z" fill="#fbc116" />
        <path d="M10 10l-0.500 9.500A9.500 9.500 0 0 1 1.800 5z" fill="#249b4b" />
        <circle cx="10" cy="10" r="4.500" fill="#fff" />
        <circle cx="10" cy="10" r="3.600" fill="#3d7ee8" />
      </svg>
      <TaskButton
        width="w-[115px]"
        margin="ml-[14px]"
        label="ROVER"
        icon={
          <svg className="ml-[7px] h-[18px] w-[16px]" viewBox="0 0 16 18">
            <path d="M1 1h8v16H1z" fill="#d9b440" />
            <path d="M3 2l10-1v15H3z" fill="#f7dc85" />
            <path d="M10 13l3-1v4h-3z" fill="#d9b440" />
          </svg>
        }
      />
      <svg className="ml-[15px] h-[21px] w-[16px] shrink-0" viewBox="0 0 16 21">
        <rect width="16" height="21" fill="#f5f5f3" />
        <rect x="2" y="2" width="12" height="4" fill="#222" />
        <path d="M2.500 10h11M2.500 13.500h11M2.500 17h11" stroke="#222" strokeWidth="2" strokeDasharray="2 2.500" />
      </svg>
      <svg className="ml-[22px] h-[15px] w-[20px] shrink-0" viewBox="0 0 20 15">
        <path d="M4 1h16l-4 13H0z" fill="#a9d0ee" />
        <path d="M5.500 3.500h11l-2.500 8H3z" fill="#2e7fbe" />
        <path d="M7 5.500h7l-1 3.500H6z" fill="#d9eefb" />
      </svg>
      <svg className="ml-[20px] h-[20px] w-[19px] shrink-0" viewBox="0 0 19 20" fill="none">
        <ellipse cx="9" cy="6" rx="8" ry="4.500" fill="#f7eceb" stroke="#d6403a" transform="rotate(-18 9 6)" />
        <path d="M9 8l2 6M13 9l-5 3" stroke="#ccc" strokeWidth="1.500" />
        <circle cx="10.500" cy="16" r="2" stroke="#2f86cc" strokeWidth="1.600" />
        <circle cx="15.500" cy="13" r="2" stroke="#2f86cc" strokeWidth="1.600" />
      </svg>
      <TaskButton
        width="w-[115px]"
        margin="ml-[14px]"
        label="*Untitled - Notep..."
        icon={
          <svg className="ml-[5px] h-[18px] w-[18px]" viewBox="0 0 18 18">
            <path d="M5 1l12 1-2 15-14-3z" fill="#d9eef4" />
            <path d="M5 2l9 1-2 12-11-2z" fill="#4aa8c6" />
            <path d="M5 2l9 1-0.500 3L4 5z" fill="#9fd6e6" />
          </svg>
        }
      />
      <TaskButton width="w-[121px]" margin="ml-[4px]" label="BM - Excel (Prod..." active icon={<ExcelIcon className="ml-[9px] h-[17px] w-[18px]" />} />
      <TaskButton
        width="w-[115px]"
        margin="ml-[4px]"
        label="Recording..."
        icon={
          <svg className="ml-[4px] h-[20px] w-[20px] shrink-0" viewBox="0 0 20 20">
            <rect width="20" height="20" rx="1.500" fill="#ea4b27" />
            <path d="M15.500 4H7.500a3 3 0 0 0-3 3v6a3 3 0 0 0 3 3h8v-3H8V7h7.500z" fill="#fff" />
          </svg>
        }
      />
      <TaskButton width="w-[115px]" margin="ml-[7px]" label={"F:\\\\20210307_RA..."} icon={<SurveyIcon className="ml-[4px] h-[20px] w-[20px]" />} />
      <div className="ml-[12px] h-[18px] w-[4px] shrink-0 bg-[#3a3b3a]" />
      <span className="ml-[9px] w-[46px] shrink-0 text-[10.500px] tracking-[-0.200px]">EN</span>
      <svg className="h-[14px] w-[13px] shrink-0" viewBox="0 0 13 14" fill="none" stroke="#e5e5e3">
        <circle cx="9" cy="3.300" r="2.500" />
        <circle cx="4" cy="7" r="2" />
        <path d="M0.500 13c0-5 6.500-5 6.500 0M6.500 8c2-3 6-1.500 6 2" />
      </svg>
      <svg className="ml-[17px] h-[7px] w-[12px] shrink-0" viewBox="0 0 12 7" fill="none" stroke="#e5e5e3" strokeWidth="1.200">
        <path d="M0.500 6.200L6 0.800l5.500 5.400" />
      </svg>
      <svg className="ml-[8px] h-[14px] w-[10px] shrink-0" viewBox="0 0 10 14">
        <rect x="2" y="0" width="6" height="10" rx="1" fill="#fff" />
        <path d="M0.500 6v3.500c0 2 9 2 9 0V6M5 11v2M2.500 13.300h5" fill="none" stroke="#ddd" />
      </svg>
      <svg className="ml-[8px] h-[13px] w-[15px] shrink-0" viewBox="0 0 15 13" fill="none" stroke="#e5e5e3">
        <path d="M0.500 4.500h2l3-3v10l-3-3h-2zM7.500 4.500c1 1 1 3 0 4M9.500 3c2 2 2 5 0 7M12 1.500c3 3 3 7 0 10" />
      </svg>
      <svg className="ml-[6px] h-[14px] w-[14px] shrink-0" viewBox="0 0 14 14">
        <path d="M1 2l5-2 6 2c0 5-1 8-6 11C2 10 1 7 1 2z" fill="#9b9c9a" />
        <path d="M6 0v13C2 10 1 7 1 2z" fill="#c9cac8" />
        <rect x="7.500" y="7" width="5.500" height="5.500" fill="#ea1c22" />
      </svg>
      <svg className="ml-[6px] h-[14px] w-[14px] shrink-0" viewBox="0 0 14 14">
        <path d="M1 2l5.500-2L12 2c0 5-1 8-5.500 11C2 10 1 7 1 2z" fill="#fff" />
        <path d="M6.500 0v12M1 6h11" stroke="#333" strokeWidth="0.800" />
        <circle cx="10" cy="10" r="4" fill="#12a36c" />
        <path d="M8 10l1.500 1.500L12 8.500" fill="none" stroke="#fff" />
      </svg>
      <svg className="ml-[7px] h-[12px] w-[12px] shrink-0" viewBox="0 0 12 12" fill="none" stroke="#b5b6b4">
        <path d="M1 11.500C1 5 5 1 11.500 1M4 11.500C4 7 7 4 11.500 4M7 11.500C7 9 9 7 11.500 7" />
        <circle cx="10.500" cy="10.500" r="1" fill="#fff" />
      </svg>
      <svg className="ml-[8px] h-[9px] w-[14px] shrink-0" viewBox="0 0 14 9" fill="none" stroke="#e5e5e3">
        <path d="M0.500 1h11v7h-11zM12.500 3v3.500" />
        <path d="M2 2.500h6v4H2z" fill="#e5e5e3" />
      </svg>
      <div className="ml-[8px] w-[44px] shrink-0 pb-[1px] text-center text-[10.500px] leading-[15px] tracking-[-0.350px]">
        <div>8:11 AM</div>
        <div>3/7/2021</div>
      </div>
      <svg className="ml-[15px] h-[20px] w-[22px] shrink-0" viewBox="0 0 22 20">
        <path d="M1 1h14v11H7l-3 3v-3H1z" fill="#fff" />
        <path d="M3.500 4h9M3.500 6.500h9M3.500 9h5" stroke="#333" />
        <circle cx="14" cy="13.500" r="6" fill="#3a3b3a" stroke="#888" />
        <text x="14" y="17" fontSize="9.500" textAnchor="middle" fill="#fff">2</text>
      </svg>
      <div className="ml-[11px] h-[33px] w-px shrink-0 bg-[#5a5b5a]" />
    </div>
  );
}

export default function App() {
  return (
    <div className="relative flex h-[720px] w-[1280px] flex-col overflow-hidden font-['Open_Sans',sans-serif] leading-none whitespace-nowrap">
      <BackgroundApp />
      <Taskbar />
      <ExcelWindow />
      <div className="absolute top-[705px] left-[633px] h-[15px] w-[14px] bg-black pl-[1px] font-['Liberation_Mono',monospace] text-[13px] leading-[16px] text-[#22d422]">1</div>
      <svg className="absolute top-[144px] left-[1109px] h-[13px] w-[9px]" viewBox="0 0 9 13" fill="#fff" stroke="#333" strokeWidth="0.900">
        <path d="M0.700 0.800v10l2.300-2.200 1.500 3.400 1.500-0.700-1.500-3.300h3.300z" />
      </svg>
    </div>
  );
}
